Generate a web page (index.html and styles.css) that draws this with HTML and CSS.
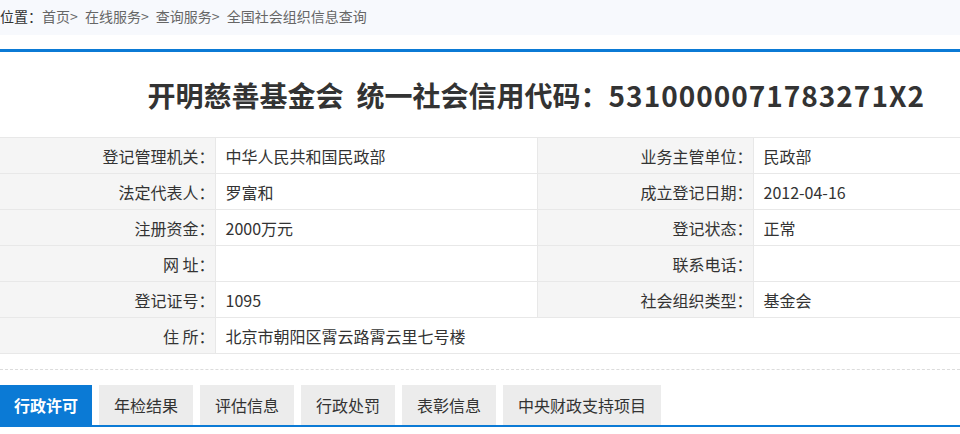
FILE: index.html
```html
<!DOCTYPE html>
<html lang="zh-CN">
<head>
<meta charset="utf-8">
<title>全国社会组织信息查询</title>
<link rel="stylesheet" href="styles.css">
</head>
<body>
<div class="crumbs">
  <span class="here">位置<span class="colon">：</span></span><a href="#">首页</a>&gt; <a href="#">在线服务</a>&gt; <a href="#">查询服务</a>&gt; <a href="#">全国社会组织信息查询</a>
</div>
<div class="rule"></div>
<h1 class="title"><span class="org">开明慈善基金会</span><span class="code">统一社会信用代码<span class="colon">：</span><span class="num">5310000071783271X2</span></span></h1>
<table class="info">
  <colgroup>
    <col class="c1"><col class="c2"><col class="c3"><col class="c4">
  </colgroup>
  <tr><th>登记管理机关<span class="colon">：</span></th><td>中华人民共和国民政部</td><th>业务主管单位<span class="colon">：</span></th><td>民政部</td></tr>
  <tr><th>法定代表人<span class="colon">：</span></th><td>罗富和</td><th>成立登记日期<span class="colon">：</span></th><td>2012-04-16</td></tr>
  <tr><th>注册资金<span class="colon">：</span></th><td>2000万元</td><th>登记状态<span class="colon">：</span></th><td>正常</td></tr>
  <tr><th>网 址<span class="colon">：</span></th><td></td><th>联系电话<span class="colon">：</span></th><td></td></tr>
  <tr><th>登记证号<span class="colon">：</span></th><td>1095</td><th>社会组织类型<span class="colon">：</span></th><td>基金会</td></tr>
  <tr><th>住 所<span class="colon">：</span></th><td colspan="3">北京市朝阳区霄云路霄云里七号楼</td></tr>
</table>
<div class="dash"></div>
<div class="tabs">
  <div class="tab active">行政许可</div>
  <div class="tab">年检结果</div>
  <div class="tab">评估信息</div>
  <div class="tab">行政处罚</div>
  <div class="tab">表彰信息</div>
  <div class="tab">中央财政支持项目</div>
</div>
</body>
</html>
```
FILE: styles.css
```css
html, body {
  margin: 0;
  padding: 0;
  background: #fff;
}
body {
  font-family: "Noto Sans CJK SC", "Noto Sans", sans-serif;
  color: #333;
  width: 960px;
  overflow: hidden;
}
.colon {
  font-family: "Noto Sans CJK TC", "Noto Sans CJK SC", sans-serif;
}
.crumbs {
  height: 35px;
  line-height: 33px;
  background: #f7f9fd;
  font-size: 14px;
  color: #666;
  white-space: nowrap;
  word-spacing: 4px;
}
.crumbs .here {
  color: #333;
}
.crumbs a {
  color: #666;
  text-decoration: none;
}
.rule {
  margin-top: 14px;
  height: 3px;
  background: #0b7ad5;
}
.title {
  margin: 0;
  height: 85px;
  line-height: 86px;
  font-size: 28px;
  font-weight: bold;
  color: #333;
  text-align: right;
  padding-right: 35px;
  white-space: nowrap;
}
.title .code {
  margin-left: 13px;
}
.title .num {
  letter-spacing: 1px;
}
.info {
  width: 960px;
  border-collapse: collapse;
  table-layout: fixed;
  font-size: 16px;
}
.info .c1 { width: 215px; }
.info .c2 { width: 322px; }
.info .c3 { width: 216px; }
.info .c4 { width: 207px; }
.info th, .info td {
  height: 35px;
  border: 1px solid #e8e8e8;
  padding: 0;
  white-space: nowrap;
}
.info tr > :first-child { border-left: none; }
.info tr > :last-child { border-right: none; }
.info th {
  background: #f5f5f5;
  font-weight: normal;
  text-align: right;
  padding-right: 0;
  color: #333;
}
.info td {
  text-align: left;
  padding-left: 10px;
  color: #333;
}
.dash {
  margin-top: 15px;
  border-top: 1px dashed #dcdcdc;
}
.tabs {
  margin-top: 15px;
  display: flex;
  gap: 7px;
  border-bottom: 2px solid #0b7ad5;
}
.tab {
  height: 40px;
  line-height: 40px;
  padding: 0 15px;
  font-size: 16px;
  background: #ececec;
  color: #333;
  white-space: nowrap;
}
.tab.active {
  background: #0b7ad5;
  color: #fff;
  font-weight: bold;
  padding: 0 14px;
}
```
